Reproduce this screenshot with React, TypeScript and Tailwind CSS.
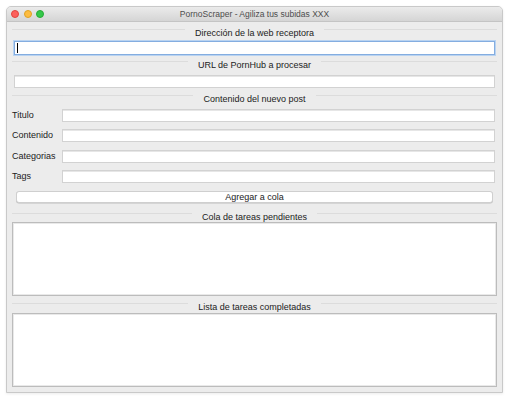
import React from 'react';

const font = { fontFamily: '"Liberation Sans", Arial, sans-serif' };

function Separator({ title, className = '' }: { title: string; className?: string }) {
  return (
    <div className={`flex items-start h-[10px] ${className}`}>
      <div className="flex-1 h-px mt-[1px] bg-[#dcdcdc]" />
      <span className="px-[10px] text-[9px] leading-[10px] text-[#222]">{title}</span>
      <div className="flex-1 h-px mt-[1px] bg-[#dcdcdc]" />
    </div>
  );
}

function Field({ label }: { label: string }) {
  return (
    <div className="flex items-center h-[13px]">
      <span className="w-[50px] shrink-0 text-[9px] leading-[13px] text-[#222]">{label}</span>
      <div className="flex-1 h-full mr-[2px] bg-white border border-[#d2d2d2] shadow-[inset_0_1px_0_#e6e6e6]" />
    </div>
  );
}

export default function App() {
  return (
    <div className="w-[509px] h-[400px] bg-white pl-[6px] pt-[6px]" style={font}>
      {/* Window */}
      <div className="w-[497px] h-[387px] flex flex-col border border-[#c9c9c9] rounded-t-[5px] bg-[#ececec] overflow-hidden shadow-[0_1px_3px_rgba(0,0,0,0.08)]">
        {/* Title bar */}
        <div className="h-[15px] shrink-0 grid grid-cols-[1fr_auto_1fr] items-center bg-gradient-to-b from-[#ebebeb] to-[#d5d5d5] border-b border-[#c4c4c4]">
          <div className="flex items-center gap-[4.5px] pl-[4px]">
            <span className="w-[8px] h-[8px] rounded-full bg-[#fc605c] border border-[#e0443e]" />
            <span className="w-[8px] h-[8px] rounded-full bg-[#fdbc40] border border-[#dea123]" />
            <span className="w-[8px] h-[8px] rounded-full bg-[#34c84a] border border-[#27aa35]" />
          </div>
          <span className="text-[8.5px] leading-[14px] text-[#4d4d4d]">PornoScraper - Agiliza tus subidas XXX</span>
          <div />
        </div>

        {/* Content */}
        <div className="flex-1 flex flex-col px-[5px]">
          <Separator title="Dirección de la web receptora" className="mt-[6px]" />
          <div className="mt-[3px] mx-[2px] h-[14px] bg-white border border-[#84ade0] shadow-[0_0_0_1px_#b9d3f1] flex items-center">
            <span className="ml-[2px] w-px h-[10px] bg-black" />
          </div>

          <Separator title="URL de PornHub a procesar" className="mt-[5px]" />
          <div className="mt-[5px] mx-[2px] h-[13px] bg-white border border-[#d2d2d2] shadow-[inset_0_1px_0_#e6e6e6]" />

          <Separator title="Contenido del nuevo post" className="mt-[6px]" />
          <div className="mt-[5px] flex flex-col gap-[7.33px]">
            <Field label="Titulo" />
            <Field label="Contenido" />
            <Field label="Categorias" />
            <Field label="Tags" />
          </div>

          <button className="mt-[8px] mx-[4px] h-[12px] bg-white border border-[#cfcfcf] rounded-[3px] text-[9px] leading-[10px] text-[#222] shadow-[0_0.5px_0_#bdbdbd]">
            Agregar a cola
          </button>

          <Separator title="Cola de tareas pendientes" className="mt-[9px]" />
          <div className="h-[74px] bg-white border border-[#bcbcbc] shadow-[inset_0_0_0_1px_#e9e9e9]" />

          <Separator title="Lista de tareas completadas" className="mt-[6px]" />
          <div className="mt-[1px] h-[74px] bg-white border border-[#bcbcbc] shadow-[inset_0_0_0_1px_#e9e9e9]" />
        </div>
      </div>
    </div>
  );
}
